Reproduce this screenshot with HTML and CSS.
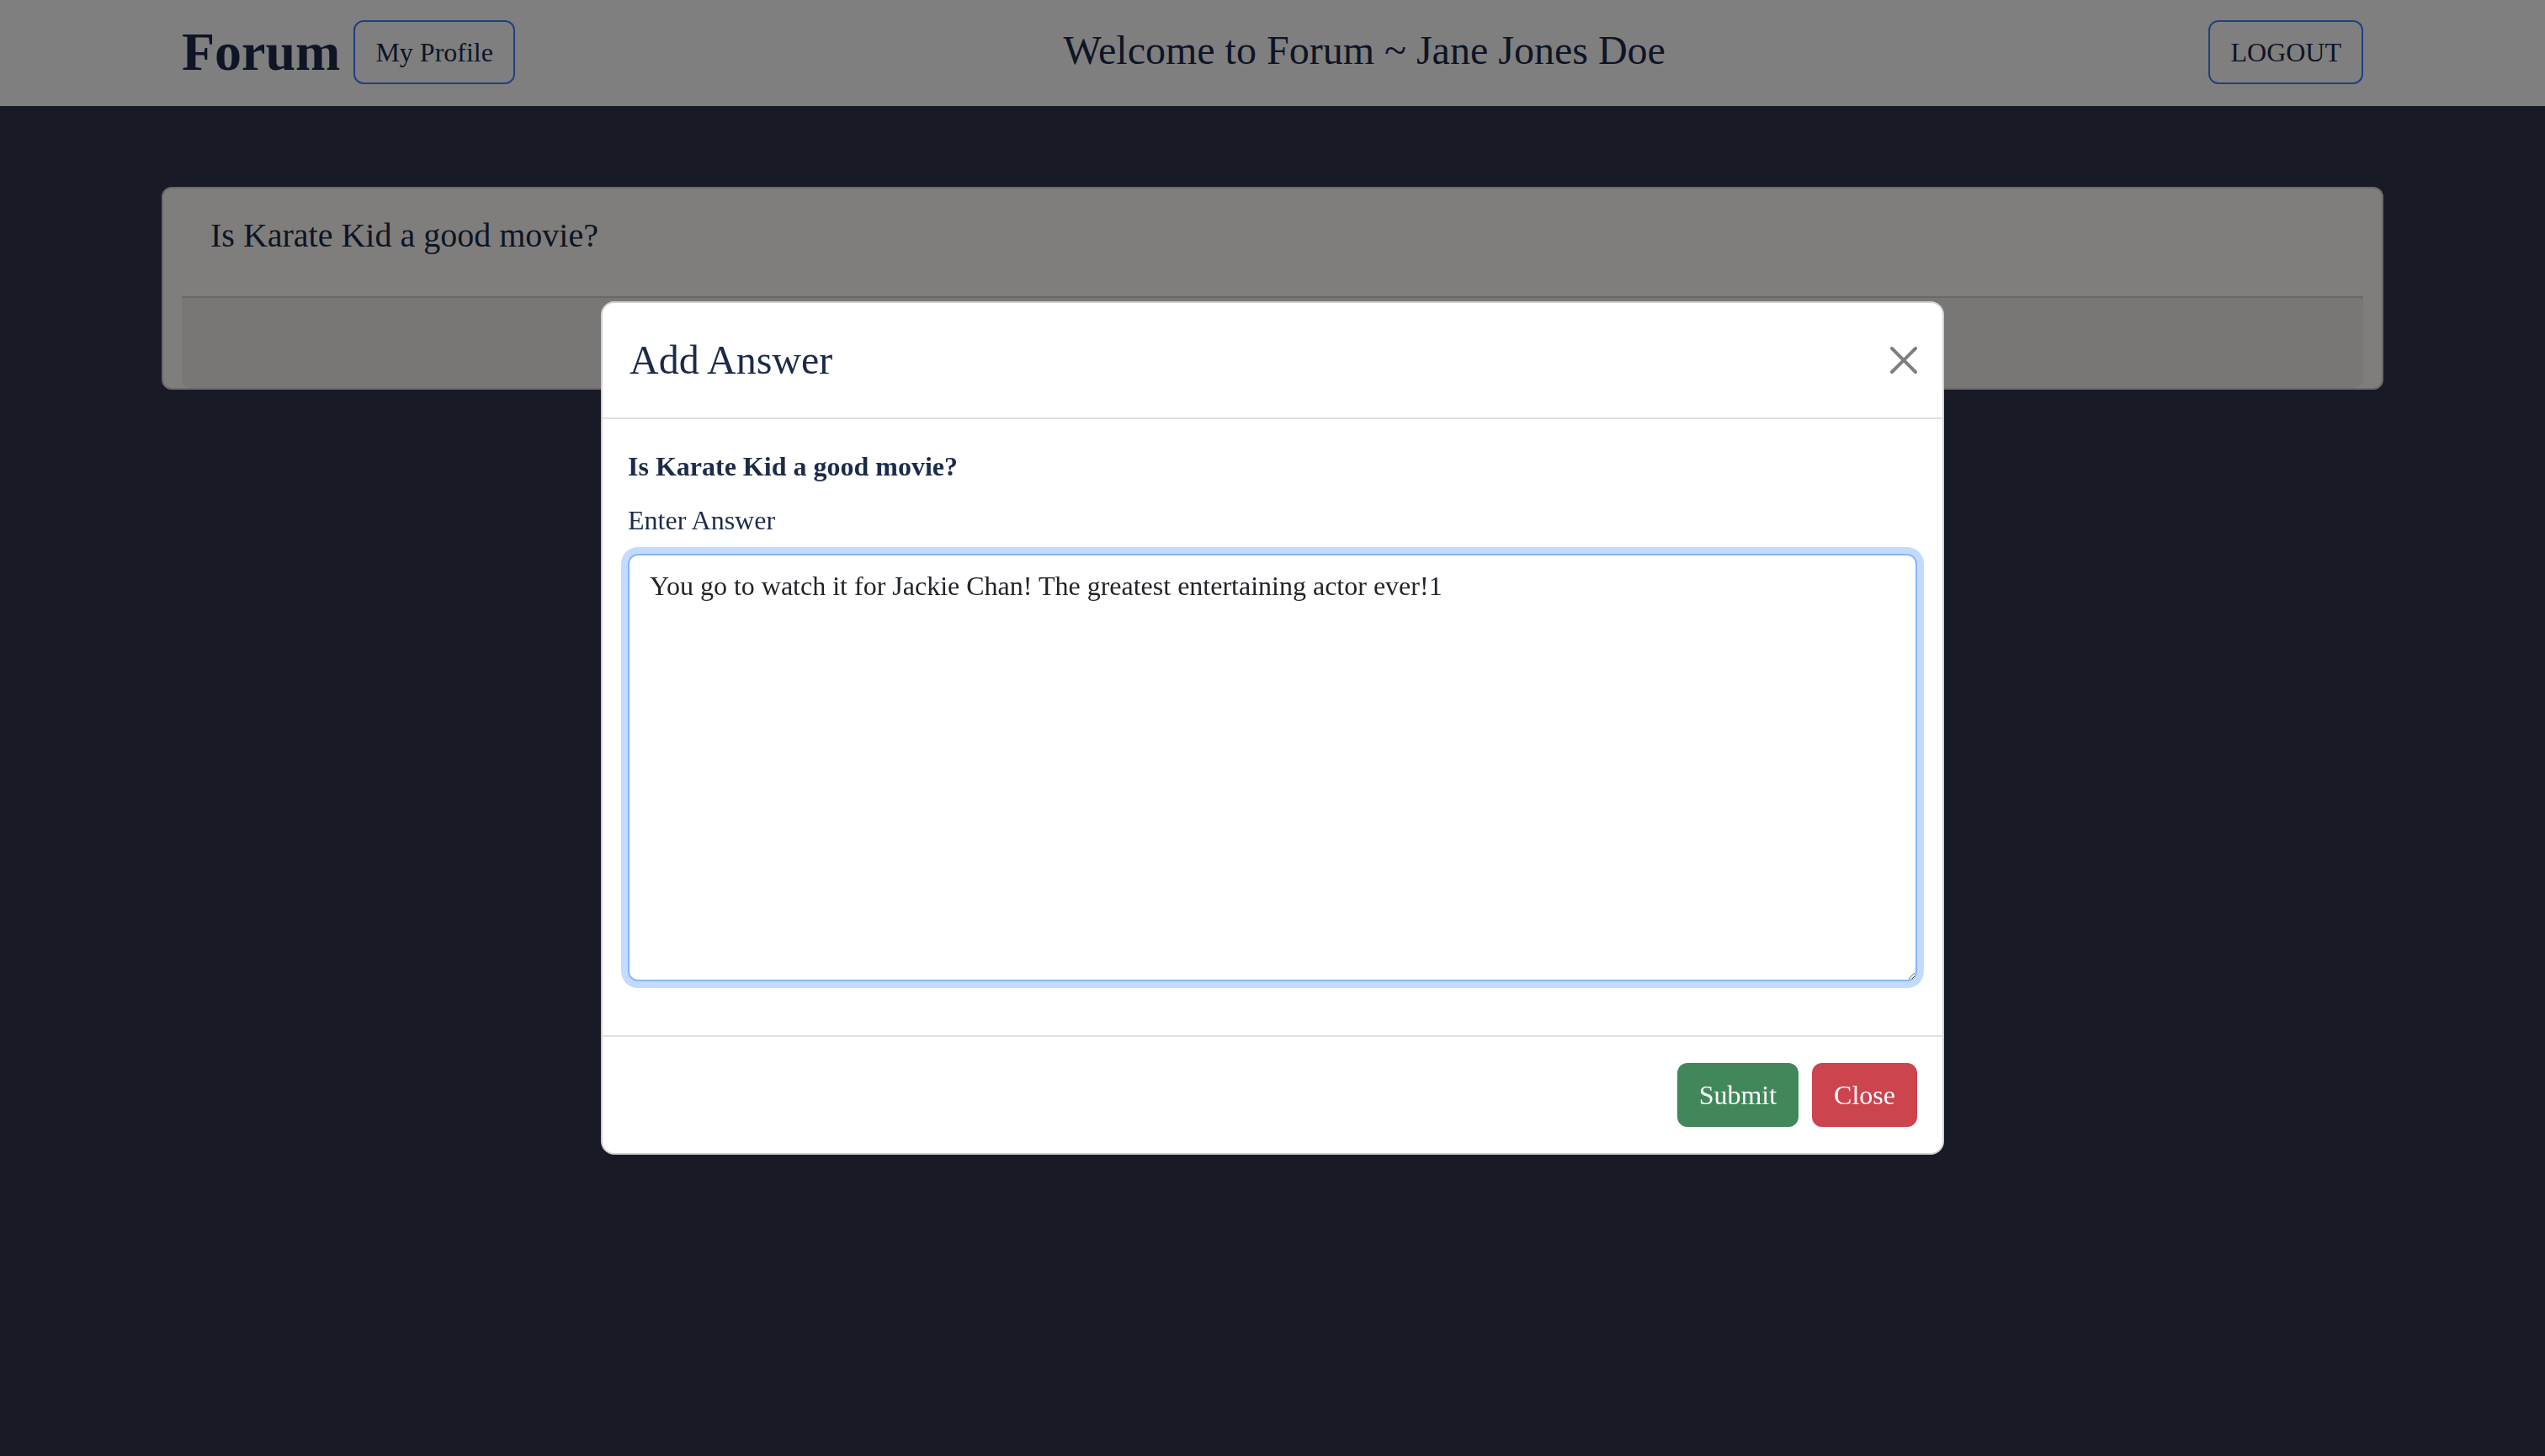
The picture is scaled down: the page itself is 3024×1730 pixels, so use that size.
FILE: index.html
```html
<!DOCTYPE html>
<html lang="en">
<head>
<meta charset="utf-8">
<title>Forum</title>
<link rel="stylesheet" href="styles.css">
</head>
<body>
<header class="navbar">
  <div class="container nav-inner">
    <div class="nav-left">
      <a class="brand">Forum</a>
      <button class="btn btn-outline">My Profile</button>
    </div>
    <div class="welcome">Welcome to Forum ~ Jane Jones Doe</div>
    <button class="btn btn-outline">LOGOUT</button>
  </div>
</header>

<main class="container main">
  <section class="card">
    <div class="card-head">
      <h5 class="card-title">Is Karate Kid a good movie?</h5>
    </div>
    <div class="card-foot"></div>
  </section>
</main>

<div class="backdrop"></div>

<div class="modal">
  <div class="modal-content">
    <div class="modal-header">
      <h5 class="modal-title">Add Answer</h5>
      <button class="btn-close" aria-label="Close">
        <svg viewBox="0 0 16 16" width="32" height="32"><path d="M.293.293a1 1 0 0 1 1.414 0L8 6.586 14.293.293a1 1 0 1 1 1.414 1.414L9.414 8l6.293 6.293a1 1 0 0 1-1.414 1.414L8 9.414l-6.293 6.293a1 1 0 0 1-1.414-1.414L6.586 8 .293 1.707a1 1 0 0 1 0-1.414z"/></svg>
      </button>
    </div>
    <div class="modal-body">
      <p class="question">Is Karate Kid a good movie?</p>
      <label class="form-label" for="answer">Enter Answer</label>
      <textarea id="answer" class="form-control" rows="10">You go to watch it for Jackie Chan! The greatest entertaining actor ever!1</textarea>
    </div>
    <div class="modal-footer">
      <button class="btn btn-success">Submit</button>
      <button class="btn btn-danger">Close</button>
    </div>
  </div>
</div>
</body>
</html>
```

FILE: styles.css
```css
* { box-sizing: border-box; }

html, body {
  margin: 0;
  padding: 0;
}

body {
  background: #30364c;
  font-family: "Liberation Serif", "Times New Roman", serif;
  color: #1c2b4a;
  font-size: 32px;
  line-height: 1.5;
  height: 1730px;
  overflow: hidden;
}

.container {
  width: 2640px;
  margin: 0 auto;
}

/* navbar */
.navbar {
  background: #ffffff;
  height: 126px;
}

.nav-inner {
  height: 126px;
  padding: 0 24px;
  display: flex;
  align-items: center;
  justify-content: space-between;
}

.nav-left {
  display: flex;
  align-items: center;
  gap: 16px;
}

.brand {
  font-size: 64px;
  font-weight: bold;
  line-height: 96px;
  margin-top: -2px;
  color: #1c2b4a;
}

.welcome {
  font-size: 48px;
  line-height: 1.2;
  margin-bottom: 6px;
  margin-left: 6px;
  color: #1c2b4a;
}

.btn {
  font-family: "Liberation Serif", "Times New Roman", serif;
  font-size: 32px;
  line-height: 48px;
  padding: 12px 24px;
  border: 2px solid transparent;
  border-radius: 12px;
  background: transparent;
  color: #1c2b4a;
  cursor: pointer;
}

.btn-outline {
  border-color: #4080ff;
  margin-top: -2px;
}

/* main */
.main {
  padding-top: 96px;
}

.card {
  background: #fefcf8;
  border: 2px solid #d6d4d2;
  border-radius: 12px;
  padding: 0 22px;
}

.card-head {
  padding: 32px 32px 32px 34px;
  border-bottom: 2px solid #d2d0ce;
}

.card-title {
  margin: 0 0 16px;
  font-size: 40px;
  font-weight: normal;
  line-height: 1.2;
  color: #1c2b4a;
}

.card-foot {
  height: 107px;
  background: #f2eeea;
  border-radius: 0 0 10px 10px;
}

/* modal */
.backdrop {
  position: fixed;
  inset: 0;
  background: rgba(0, 0, 0, 0.5);
}

.modal {
  position: fixed;
  inset: 0;
  display: flex;
  align-items: center;
  justify-content: center;
}

.modal-content {
  width: 1596px;
  background: #ffffff;
  border: 2px solid rgba(0, 0, 0, 0.175);
  border-radius: 16px;
  display: flex;
  flex-direction: column;
}

.modal-header {
  display: flex;
  align-items: center;
  justify-content: space-between;
  padding: 32px 30px 32px 32px;
  border-bottom: 2px solid #dee2e6;
}

.modal-title {
  margin: 0;
  font-size: 48px;
  font-weight: normal;
  line-height: 72px;
  color: #1c2b4a;
}

.btn-close {
  width: 32px;
  height: 32px;
  padding: 0;
  margin: 0;
  border: 0;
  background: transparent;
  display: flex;
  align-items: center;
  justify-content: center;
}

.btn-close svg {
  display: block;
  fill: #000;
  opacity: 0.5;
}

.modal-body {
  padding: 32px 30px;
  display: flex;
  flex-direction: column;
}

.question {
  margin: 0 0 16px;
  font-weight: bold;
  color: #1c2b4a;
}

.form-label {
  margin-bottom: 16px;
  color: #1c2b4a;
}

.form-control {
  display: block;
  width: 100%;
  height: 508px;
  margin-bottom: 32px;
  padding: 12px 24px;
  font-family: "Liberation Serif", "Times New Roman", serif;
  font-size: 32px;
  line-height: 1.5;
  color: #212529;
  background: #ffffff;
  border: 2px solid #86b7fe;
  border-radius: 12px;
  box-shadow: 0 0 0 8px rgba(13, 110, 253, 0.25);
  outline: none;
  resize: vertical;
}

.modal-footer {
  display: flex;
  justify-content: flex-end;
  align-items: center;
  gap: 16px;
  padding: 31px 30px;
  border-top: 2px solid #dee2e6;
}

.btn-success {
  background: #42875a;
  border-color: #42875a;
  color: #ffffff;
}

.btn-danger {
  background: #cb444e;
  border-color: #cb444e;
  color: #ffffff;
}
```
